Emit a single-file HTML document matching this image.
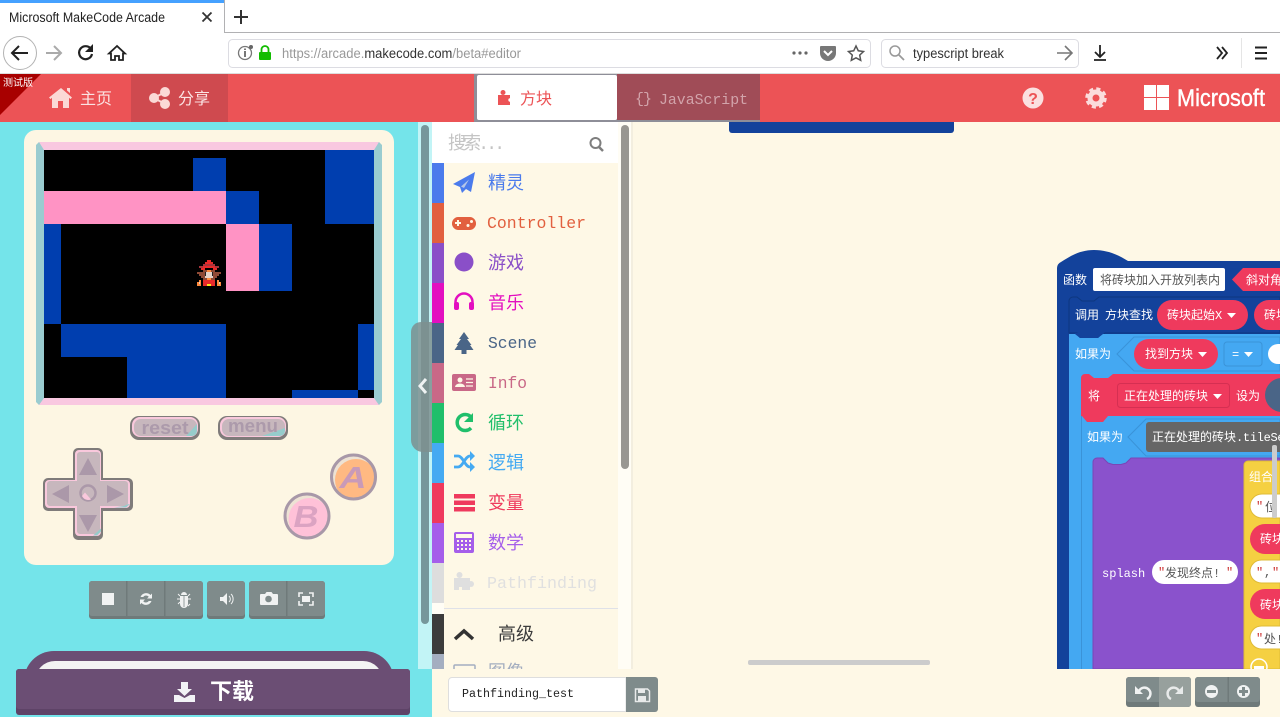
<!DOCTYPE html>
<html lang="zh"><head><meta charset="utf-8"><title>Microsoft MakeCode Arcade</title>
<style>
html,body{margin:0;padding:0;width:1280px;height:717px;overflow:hidden;background:#fff}
svg{display:block;font-family:"Liberation Sans","WenQuanYi Zen Hei","Noto Sans CJK SC",sans-serif}
.m{font-family:"Liberation Mono","WenQuanYi Zen Hei","Noto Sans CJK SC",monospace}
.t{font-size:18px;font-family:"Liberation Mono","WenQuanYi Zen Hei","Noto Sans CJK SC",monospace}
.b{font-size:12px;fill:#fff;font-family:"Liberation Mono","Noto Sans CJK SC",monospace}
</style></head><body>
<svg width="1280" height="717" viewBox="0 0 1280 717" xmlns="http://www.w3.org/2000/svg">
<!-- browser chrome -->
<rect width="1280" height="74" fill="#fff"/>
<rect x="0" y="0" width="224" height="3" fill="#45a1ff"/>
<rect x="224" y="0" width="1" height="33" fill="#b1b1b3"/>
<rect x="224" y="32" width="1056" height="1" fill="#b1b1b3"/>
<text x="9" y="22" font-size="13.5" fill="#222" textLength="156" lengthAdjust="spacingAndGlyphs">Microsoft MakeCode Arcade</text>
<path d="M202.500 12.500l9 9m0-9l-9 9" stroke="#333" stroke-width="1.800" fill="none"/>
<path d="M241 10v14M234 17h14" stroke="#333" stroke-width="2" fill="none"/>
<circle cx="20" cy="53" r="16.500" fill="#fff" stroke="#b3b3b3"/>
<path d="M28 53H13M19 46l-7 7 7 7" stroke="#222" stroke-width="2" fill="none"/>
<path d="M61 53H46M54 46l7 7-7 7" stroke="#aaa" stroke-width="2" fill="none"/>
<path d="M91 49a6.500 6.500 0 1 0 1 5" stroke="#222" stroke-width="2.200" fill="none"/><path d="M93 44v8h-8z" fill="#222"/>
<path d="M117 46l-8 7.500h2v6.500h4v-4h4v4h4v-6.500h2z" stroke="#222" stroke-width="1.800" fill="none"/>
<rect x="228.500" y="39.500" width="642" height="28" rx="4" fill="#fff" stroke="#dcdce2"/>
<circle cx="245" cy="53" r="6.500" fill="none" stroke="#777" stroke-width="1.300"/><rect x="244" y="51" width="2" height="6" fill="#777"/><rect x="244" y="48.500" width="2" height="1.500" fill="#777"/><circle cx="251" cy="47" r="2" fill="#666"/>
<rect x="259" y="52" width="12" height="8" rx="1" fill="#12bc00"/><path d="M261.500 52v-2.500a3.500 3.500 0 0 1 7 0V52" stroke="#12bc00" stroke-width="1.800" fill="none"/>
<text x="282" y="58" font-size="13.500" textLength="239" lengthAdjust="spacingAndGlyphs" fill="#999">https://arcade.<tspan fill="#333">makecode.com</tspan>/beta#editor</text>
<g fill="#666"><circle cx="794" cy="53" r="1.600"/><circle cx="800" cy="53" r="1.600"/><circle cx="806" cy="53" r="1.600"/></g>
<path d="M821 46h14a1 1 0 0 1 1 1v6a8 8 0 0 1-16 0v-6a1 1 0 0 1 1-1z" fill="#777"/><path d="M824 51l4 4 4-4" stroke="#fff" stroke-width="2" fill="none"/>
<path d="M856 46l2.300 4.800 5.200.700-3.800 3.600 1 5.200-4.700-2.500-4.700 2.500 1-5.200-3.800-3.600 5.200-.700z" fill="none" stroke="#555" stroke-width="1.500"/>
<rect x="881.500" y="39.500" width="197" height="28" rx="4" fill="#fff" stroke="#dcdce2"/>
<circle cx="895" cy="51" r="5" fill="none" stroke="#999" stroke-width="1.500"/><path d="M899 55l5 5" stroke="#999" stroke-width="1.800"/>
<text x="913" y="58" font-size="13.500" fill="#333" textLength="91" lengthAdjust="spacingAndGlyphs">typescript break</text>
<path d="M1072 53h-15M1065 46l7 7-7 7" stroke="#777" stroke-width="1.600" fill="none"/>
<path d="M1100 45v12M1095 52l5 5 5-5M1094 60h12" stroke="#222" stroke-width="1.800" fill="none"/>
<path d="M1217 47l5 6-5 6M1222 47l5 6-5 6" stroke="#222" stroke-width="1.800" fill="none"/>
<rect x="1241" y="38" width="1" height="30" fill="#e5e5e5"/>
<path d="M1255 47.500h12M1255 53h12M1255 58.500h12" stroke="#222" stroke-width="2"/>
<rect y="73" width="1280" height="1" fill="#ddd"/>

<!-- left simulator area -->
<rect x="0" y="122" width="432" height="595" fill="#74e4ea"/>
<rect x="24" y="130" width="370" height="435" rx="12" fill="#fdf6e3"/>
<!-- screen bezel -->
<path d="M39 142h340l3 3v257l-3 3H39l-3-3V145z" fill="#9accd0"/>
<path d="M39 142h340l-5 8H44zM39 405h340l-5-7H44z" fill="#f9c8e0"/>
<rect x="44" y="150" width="330" height="248" fill="#000"/>
<g fill="#003eaf" shape-rendering="crispEdges">
<rect x="193" y="158" width="33" height="33"/><rect x="325" y="150" width="49" height="74"/><rect x="226" y="191" width="33" height="33"/>
<rect x="44" y="224" width="17" height="100"/><rect x="259" y="224" width="33" height="67"/><rect x="61" y="324" width="165" height="33"/>
<rect x="127" y="357" width="99" height="41"/><rect x="358" y="324" width="16" height="66"/><rect x="292" y="390" width="66" height="8"/>
</g>
<g fill="#ff93c4" shape-rendering="crispEdges"><rect x="44" y="191" width="182" height="33"/><rect x="226" y="224" width="33" height="67"/></g>
<!-- sprite -->
<g shape-rendering="crispEdges">
<g fill="#e82a2a"><rect x="207" y="260" width="4" height="2"/><rect x="205" y="262" width="8" height="2"/><rect x="203" y="266" width="12" height="2"/><rect x="201" y="268" width="4" height="2"/><rect x="213" y="268" width="4" height="2"/><rect x="203" y="280" width="12" height="6"/></g>
<g fill="#a8343c"><rect x="203" y="264" width="12" height="2"/><rect x="199" y="266" width="4" height="2"/><rect x="215" y="266" width="4" height="2"/></g>
<g fill="#8e4a36"><rect x="203" y="270" width="12" height="2"/><rect x="201" y="272" width="4" height="6"/><rect x="213" y="272" width="4" height="6"/><rect x="197" y="272" width="4" height="2"/><rect x="217" y="272" width="4" height="2"/><rect x="199" y="274" width="2" height="2"/><rect x="217" y="274" width="2" height="2"/><rect x="203" y="278" width="12" height="2"/></g>
<g fill="#ff8a3d"><rect x="207" y="270" width="4" height="2"/><rect x="207" y="278" width="4" height="2"/><rect x="199" y="280" width="2" height="2"/><rect x="217" y="280" width="2" height="2"/><rect x="197" y="282" width="4" height="4"/><rect x="217" y="282" width="4" height="4"/></g>
<g fill="#e6d3c8"><rect x="205" y="272" width="8" height="4"/><rect x="205" y="276" width="8" height="2"/><rect x="199" y="282" width="1" height="2"/><rect x="219" y="282" width="1" height="2"/></g>
<g fill="#222"><rect x="205" y="272" width="1" height="4"/><rect x="212" y="272" width="1" height="4"/></g>
<rect x="207" y="284" width="4" height="2" fill="#ffe51e"/>
</g>
<!-- reset/menu -->
<g font-weight="bold" font-size="18" text-anchor="middle" fill="#ac9aab">
<rect x="130" y="416" width="70" height="24" rx="9" fill="#7f7b7a"/><rect x="132" y="417" width="66" height="20" rx="8" fill="#f9c8dc"/><rect x="134" y="419" width="63" height="17" rx="7" fill="#c7b7bd"/><path d="M186 436h6a5 5 0 0 0 5-5v-7z" fill="#96cccb"/>
<text x="165" y="434" textLength="47" lengthAdjust="spacingAndGlyphs">reset</text>
<rect x="218" y="416" width="70" height="24" rx="9" fill="#7f7b7a"/><rect x="220" y="417" width="66" height="20" rx="8" fill="#f9c8dc"/><rect x="222" y="419" width="63" height="17" rx="7" fill="#c7b7bd"/><path d="M262 436h18a5 5 0 0 0 5-5v-3z" fill="#96cccb"/>
<text x="253" y="432" textLength="50" lengthAdjust="spacingAndGlyphs">menu</text>
</g>
<!-- dpad -->
<path d="M78 448h20a5 5 0 0 1 5 5v25h25a5 5 0 0 1 5 5v23a5 5 0 0 1-5 5h-25v24a5 5 0 0 1-5 5H78a5 5 0 0 1-5-5v-24H48a5 5 0 0 1-5-5v-23a5 5 0 0 1 5-5h25v-25a5 5 0 0 1 5-5z" fill="#7f7b7a"/>
<path d="M79 450h18a4 4 0 0 1 4 4v26h25a4 4 0 0 1 4 4v20a4 4 0 0 1-4 4h-25v24a4 4 0 0 1-4 4H79a4 4 0 0 1-4-4v-24H49a4 4 0 0 1-4-4v-20a4 4 0 0 1 4-4h26v-26a4 4 0 0 1 4-4z" fill="#f9c8dc"/>
<path d="M80 452h17a3 3 0 0 1 3 3v26h25a3 3 0 0 1 3 3v19a3 3 0 0 1-3 3h-25v25a3 3 0 0 1-3 3H80a3 3 0 0 1-3-3v-25H50a3 3 0 0 1-3-3v-19a3 3 0 0 1 3-3h27v-26a3 3 0 0 1 3-3z" fill="#c7b7bd"/>
<path d="M93 535.500h4l4-4v-3zM114 507.500h12l4-3.500-3 .500-3 1.500z" fill="#96cccb"/>
<g fill="#ab98a9"><path d="M88 458l9 17H79zM88 532l-9-17h18zM52 494l17-9v18zM124 494l-17-9v18z"/></g>
<circle cx="88" cy="493" r="7.500" fill="#c7b7bd" stroke="#ab98a9" stroke-width="2.500"/><path d="M82 496a7 7 0 0 0 9 3.500l-6-7z" fill="#f9c8dc"/>
<!-- A B -->
<clipPath id="ca"><circle cx="353.500" cy="477" r="22"/></clipPath>
<clipPath id="cb"><circle cx="307" cy="516" r="22"/></clipPath>
<circle cx="353.500" cy="477" r="22" fill="#ede2d4"/>
<circle cx="356" cy="480" r="21" fill="#ffb982" clip-path="url(#ca)"/>
<circle cx="353.500" cy="477" r="22" fill="none" stroke="#a898a8" stroke-width="3"/>
<text x="353" y="488" font-size="31" font-weight="bold" font-style="italic" fill="#c99ab8" text-anchor="middle" textLength="27" lengthAdjust="spacingAndGlyphs">A</text>
<circle cx="307" cy="516" r="22" fill="#ede2d4"/>
<circle cx="309.500" cy="519" r="21" fill="#ffc1d8" clip-path="url(#cb)"/>
<circle cx="307" cy="516" r="22" fill="none" stroke="#a898a8" stroke-width="3"/>
<text x="306" y="527" font-size="31" font-weight="bold" font-style="italic" fill="#dba3c2" text-anchor="middle" textLength="25" lengthAdjust="spacingAndGlyphs">B</text>
<!-- sim buttons -->
<g fill="#6f7a7a"><rect x="89" y="581" width="114" height="38" rx="3"/><rect x="207" y="581" width="38" height="38" rx="3"/><rect x="249" y="581" width="76" height="38" rx="3"/></g>
<g fill="#7f8b8b"><rect x="89" y="581" width="114" height="35" rx="3"/><rect x="207" y="581" width="38" height="35" rx="3"/><rect x="249" y="581" width="76" height="35" rx="3"/></g>
<g fill="#6f7a7a"><rect x="126" y="581" width="1.500" height="38"/><rect x="164" y="581" width="1.500" height="38"/><rect x="286" y="581" width="1.500" height="38"/></g>
<g fill="#f0f2f2" stroke="none">
<rect x="102" y="593" width="12" height="12"/>
<path d="M140.500 597a6 6 0 0 1 10-2l1.500-1.500v5h-5l1.800-1.800a3.500 3.500 0 0 0-5.600 .3zM151.500 601a6 6 0 0 1-10 2l-1.500 1.500v-5h5l-1.800 1.800a3.500 3.500 0 0 0 5.600-.3z"/>
<path d="M181 595a3 3 0 0 1 6 0zM180 596h8v8a4 4 0 0 1-8 0z"/><path d="M178 594l2 2M190 594l-2 2M177 599h3M191 599h-3M178 604l2-2M190 604l-2 2" stroke="#f0f2f2" fill="none"/><rect x="183.600" y="596" width=".8" height="11" fill="#7f8b8b"/>
<path d="M220 597h3l4-4v12l-4-4h-3z"/><path d="M229 596a4 4 0 0 1 0 6M231 594a7 7 0 0 1 0 10" stroke="#f0f2f2" fill="none"/>
<path d="M261 594h4l1.500-2h5l1.500 2h4a1 1 0 0 1 1 1v9a1 1 0 0 1-1 1h-16a1 1 0 0 1-1-1v-9a1 1 0 0 1 1-1z"/>
</g>
<circle cx="268.500" cy="599" r="3.300" fill="#7f8b8b"/>
<path d="M299 597v-4h4M309 593h4v4M313 601v4h-4M303 605h-4v-4" stroke="#f0f2f2" stroke-width="1.600" fill="none"/><rect x="302" y="596" width="8" height="6" fill="#f0f2f2"/>
<!-- download -->
<path d="M24 700v-19a30 30 0 0 1 30-30h310a30 30 0 0 1 30 30v19z" fill="#6b4e74"/>
<path d="M35 700v-19a20 20 0 0 1 20-20h308a20 20 0 0 1 20 20v19z" fill="#f3f3f3"/>
<rect x="16" y="669" width="394" height="46" rx="3" fill="#5e4367"/>
<rect x="16" y="669" width="394" height="40" rx="3" fill="#6b4e74"/>
<path d="M181 682h7v7h4l-7.500 7-7.500-7h4z" fill="#f2f2f6"/><path d="M174 695h5l5.500 3 5.500-3h5v7h-21z" fill="#f2f2f6"/>
<text x="210" y="699" font-size="22" font-weight="bold" fill="#fff" font-family="Noto Sans CJK SC">下载</text>

<!-- header -->
<rect y="74" width="1280" height="48" fill="#ec5356"/>
<path d="M0 74h41L0 115z" fill="#a80000"/>
<text x="3" y="86" font-size="10" fill="#fff" font-family="Noto Sans CJK SC">测试版</text>
<rect x="131" y="74" width="97" height="48" fill="#cf4a4f"/>
<path d="M61 88l11 9.500-1.500 1.600-1.500-1.300V108h-6v-7h-5v7h-6V97.800l-1.500 1.300-1.500-1.600zM67 88h3v5l-3-2.500z" fill="#fbd9d6"/>
<text x="80" y="104" font-size="16" fill="#fbe3e3">主页</text>
<g fill="#fbd9d6"><circle cx="154" cy="98" r="5"/><circle cx="165" cy="92" r="5"/><circle cx="165" cy="104" r="5"/><path d="M154 98L165 92M154 98L165 104" stroke="#fbd9d6" stroke-width="2"/></g>
<text x="178" y="104" font-size="16" fill="#fbe3e3">分享</text>
<rect x="474" y="74" width="286" height="48" fill="#8e8e98"/>
<rect x="617" y="74" width="143" height="46" fill="#a04c57"/>
<rect x="477" y="75" width="140" height="45" rx="2" fill="#fff"/>
<rect x="498" y="95" width="12" height="10" fill="#ec5356"/><circle cx="503" cy="92.500" r="2.500" fill="#ec5356"/><circle cx="510" cy="100" r="1.700" fill="#fff"/>
<text x="520" y="104" font-size="16" fill="#ec5356">方块</text>
<text x="635" y="103" class="m" font-size="15" fill="#d2a4ab" textLength="17">{}</text>
<text x="659" y="104" class="m" font-size="15" fill="#d2a4ab" textLength="89" lengthAdjust="spacingAndGlyphs">JavaScript</text>
<circle cx="1033" cy="98" r="10.500" fill="#fbe0e0"/><text x="1033" y="104" font-size="16" font-weight="bold" fill="#ec5356" text-anchor="middle">?</text>
<circle cx="1096" cy="98" r="6" fill="none" stroke="#fbdcdc" stroke-width="5"/><circle cx="1096" cy="98" r="9" fill="none" stroke="#fbdcdc" stroke-width="3.500" stroke-dasharray="4 3.070"/>
<g fill="#fff"><rect x="1144" y="85" width="12" height="12"/><rect x="1157" y="85" width="12" height="12"/><rect x="1144" y="98" width="12" height="12"/><rect x="1157" y="98" width="12" height="12"/></g>
<text x="1177" y="106" font-size="24" fill="#fff" stroke="#fff" stroke-width=".4" textLength="88" lengthAdjust="spacingAndGlyphs">Microsoft</text>

<!-- workspace -->
<rect x="432" y="122" width="848" height="595" fill="#fef8e6"/>
<path d="M729 122h225v8a3 3 0 0 1-3 3H732a3 3 0 0 1-3-3z" fill="#13429b"/>

<!-- blocks -->
<path d="M1057 669V268a7 7 0 0 1 4-6c8-5 18-12 33-12s26 6 34 11H1280v408z" fill="#13429b"/>
<rect x="1093" y="268" width="132" height="23" rx="2" fill="#fff"/>
<text x="1063" y="284" class="b" fill="#fff">函数</text>
<text x="1100" y="284" class="b" style="fill:#555">将砖块加入开放列表内</text>
<path d="M1232 279.500L1243 268H1280V291H1243z" fill="#ef3a5d"/>
<text x="1246" y="284" class="b">斜对角</text>
<path d="M1069 333v-32a4 4 0 0 1 4-4h4l5 4h12l5-4h181v36h-175l-5 5h-18l-5-5z" fill="#13429b" stroke="#0e377f"/>
<text x="1075" y="319" class="b">调用</text><text x="1105" y="319" class="b">方块查找</text>
<rect x="1157" y="300" width="91" height="30" rx="15" fill="#ef3a5d"/><text x="1167" y="319" class="b">砖块起始X</text>
<path d="M1227 313h9l-4.500 5z" fill="#fff"/>
<rect x="1254" y="300" width="40" height="30" rx="15" fill="#ef3a5d"/><text x="1264" y="319" class="b">砖块</text>
<path d="M1069 334h6l5 4h18l5-4h177v335h-211z" fill="#44a8f2"/>
<path d="M1075 333l5 5h18l5-5" fill="#13429b"/>
<text x="1075" y="358" class="b">如果为</text>
<path d="M1117 354l17-17h146v34h-146z" fill="#44a8f2" stroke="#3a93d8"/>
<rect x="1134" y="339" width="84" height="30" rx="15" fill="#ef3a5d"/><text x="1145" y="358" class="b">找到方块</text><path d="M1198 352h9l-4.500 5z" fill="#fff"/>
<rect x="1224" y="342" width="38" height="24" rx="3" fill="#44a8f2" stroke="#3a93d8"/>
<text x="1232" y="358" class="b">=</text><path d="M1244 352h9l-4.500 5z" fill="#fff"/>
<rect x="1268" y="344" width="30" height="20" rx="10" fill="#fff"/>
<path d="M1081 428V378a4 4 0 0 1 4-4h4l5 4h14l5-4h167v42h-172l-5 6h-16l-5-6h-1z" fill="#ef3a5d"/>
<path d="M1081.500 416v253" stroke="#3a93d8" fill="none"/>
<text x="1088" y="400" class="b">将</text>
<rect x="1117.500" y="383.500" width="112" height="24" rx="3" fill="#ef3a5d" stroke="#d52f52"/>
<text x="1124" y="400" class="b">正在处理的砖块</text><path d="M1213 394h9l-4.500 5z" fill="#fff"/>
<text x="1236" y="400" class="b">设为</text>
<rect x="1265" y="378" width="40" height="34" rx="17" fill="#4a6587"/>
<text x="1087" y="441" class="b">如果为</text>
<path d="M1128 437l18-18h134v37h-134z" fill="#44a8f2" stroke="#3a93d8"/>
<rect x="1146" y="422" width="140" height="30" rx="3" fill="#666"/>
<text x="1152" y="441" class="b">正在处理的砖块<tspan letter-spacing="-.3">.tileSe</tspan></text>
<path d="M1093 669V462a4 4 0 0 1 4-4h6l5 5 5 1.500h8l5-1.500 5-5h149v211z" fill="#8a52cc" stroke="#7a46b6"/>
<text x="1102" y="577" class="b">splash</text>
<rect x="1152" y="560" width="86" height="24" rx="12" fill="#fff"/>
<text x="1158" y="576" class="b" style="fill:#c33">"</text><text x="1165" y="577" class="b" style="fill:#555">发现终点!</text><text x="1226" y="576" class="b" style="fill:#c33">"</text>
<path d="M1244 669V465a4 4 0 0 1 4-4h32v208z" fill="#f5d042" stroke="#dfbb37"/>
<text x="1249" y="481" class="b">组合</text>
<g fill="#fff" stroke="#dfbb37"><rect x="1250" y="494" width="60" height="24" rx="12"/><rect x="1250" y="560" width="60" height="23" rx="11.500"/><rect x="1250" y="626" width="60" height="23" rx="11.500"/></g>
<g fill="#ef3a5d"><rect x="1250" y="524" width="60" height="30" rx="15"/><rect x="1250" y="589" width="60" height="30" rx="15"/></g>
<text x="1256" y="510" class="b" style="fill:#c33">"</text><text x="1265" y="511" class="b" style="fill:#555">位</text>
<text x="1260" y="543" class="b">砖块</text><text x="1260" y="609" class="b">砖块</text>
<text x="1256" y="576" class="b" style="fill:#c33">"</text><text x="1264" y="576" class="b" style="fill:#555">,</text><text x="1272" y="576" class="b" style="fill:#c33">"</text>
<text x="1256" y="642" class="b" style="fill:#c33">"</text><text x="1264" y="643" class="b" style="fill:#555">处!</text>
<circle cx="1259" cy="667" r="8" fill="none" stroke="#fff" stroke-width="1.500"/><rect x="1254" y="666" width="10" height="3" fill="#fff"/>
<rect x="1272" y="445" width="5" height="73" rx="2" fill="#ccc"/>
<rect x="748" y="660" width="182" height="5" rx="2" fill="#ccc"/>

<!-- toolbox -->
<rect x="418" y="122" width="14" height="547" fill="#c2f4f6"/>
<rect x="421" y="125" width="8" height="499" rx="4" fill="#76979b"/>
<rect x="432" y="122" width="200" height="547" fill="#fffdf5"/>
<rect x="432" y="122" width="186" height="41" fill="#fff"/>
<rect x="444" y="163" width="174" height="506" fill="#fef8e6"/>
<rect x="631" y="122" width="2" height="547" fill="#f3eedf"/>
<rect x="621" y="125" width="8" height="344" rx="4" fill="#999791"/>
<text x="448" y="149" class="t" fill="#c4c4c4" textLength="57">搜索...</text>
<circle cx="595.500" cy="143" r="5" fill="none" stroke="#7e7e7e" stroke-width="2"/><path d="M599 147l4 4" stroke="#7e7e7e" stroke-width="2.500"/>
<g shape-rendering="crispEdges">
<rect x="432" y="163" width="12" height="40" fill="#4b7bec"/>
<rect x="432" y="203" width="12" height="40" fill="#e2603f"/>
<rect x="432" y="243" width="12" height="40" fill="#8a4fc8"/>
<rect x="432" y="283" width="12" height="40" fill="#e30fc0"/>
<rect x="432" y="323" width="12" height="40" fill="#4a6587"/>
<rect x="432" y="363" width="12" height="40" fill="#c96887"/>
<rect x="432" y="403" width="12" height="40" fill="#20bf6b"/>
<rect x="432" y="443" width="12" height="40" fill="#45aaf2"/>
<rect x="432" y="483" width="12" height="40" fill="#ef3a5d"/>
<rect x="432" y="523" width="12" height="40" fill="#a55eea"/>
<rect x="432" y="563" width="12" height="40" fill="#dddddd"/>
<rect x="444" y="608" width="174" height="1" fill="#dfe1e8"/>
<rect x="432" y="614" width="12" height="40" fill="#3c3c3c"/>
<rect x="432" y="654" width="12" height="15" fill="#a4aec0"/>
</g>
<text x="488" y="189" class="t" fill="#4b7bec">精灵</text>
<text x="487" y="228" class="t" fill="#e2603f" style="font-size:16.500px" textLength="99" lengthAdjust="spacingAndGlyphs">Controller</text>
<text x="488" y="269" class="t" fill="#8a4fc8">游戏</text>
<text x="488" y="309" class="t" fill="#e30fc0">音乐</text>
<text x="488" y="348" class="t" fill="#4a6587" style="font-size:16.500px" textLength="49" lengthAdjust="spacingAndGlyphs">Scene</text>
<text x="488" y="388" class="t" fill="#c96887" style="font-size:16.500px" textLength="39" lengthAdjust="spacingAndGlyphs">Info</text>
<text x="488" y="429" class="t" fill="#20bf6b">循环</text>
<text x="488" y="469" class="t" fill="#45aaf2">逻辑</text>
<text x="488" y="509" class="t" fill="#ef3a5d">变量</text>
<text x="488" y="549" class="t" fill="#a55eea">数学</text>
<text x="487" y="588" class="t" fill="#e0e0e0" style="font-size:16.500px" textLength="110" lengthAdjust="spacingAndGlyphs">Pathfinding</text>
<text x="498" y="640" class="t" fill="#3c3c3c">高级</text>
<text x="488" y="678" class="t" fill="#a4aec0">图像</text>
<!-- toolbox icons -->
<path d="M475 172l-22 12 7 3 2 6 4-4 5 3z" fill="#4b7bec"/><path d="M461 186.500l8-7-5 8.500z" fill="#fef8e6" fill-opacity=".6"/>
<path d="M458 217h12a6.500 6.500 0 0 1 6 6 6.500 6.500 0 0 1-6 7h-12a6.500 6.500 0 0 1-6-7 6.500 6.500 0 0 1 6-6z" fill="#e2603f"/><path d="M455 223h6M458 220v6" stroke="#fef8e6" stroke-width="2"/><circle cx="468" cy="225.500" r="1.500" fill="#fef8e6"/><circle cx="471.500" cy="221.500" r="1.500" fill="#fef8e6"/>
<circle cx="464" cy="262" r="9.500" fill="#8a4fc8"/>
<path d="M455.500 305v-3a8.500 8.500 0 0 1 17 0v3" stroke="#e30fc0" stroke-width="2.500" fill="none"/><rect x="454" y="302" width="5" height="8" rx="2" fill="#e30fc0"/><rect x="469" y="302" width="5" height="8" rx="2" fill="#e30fc0"/>
<path d="M464 332l5 7h-2l4.500 6h-1.500l3.500 5h-7v4h-5v-4h-7l3.500-5h-1.500l4.500-6h-2z" fill="#4a6587"/>
<rect x="452" y="374" width="24" height="17" rx="2" fill="#c96887"/><circle cx="460" cy="380" r="2.500" fill="#fef8e6"/><path d="M455 387a5 3.500 0 0 1 10 0z" fill="#fef8e6"/><path d="M466 379h7M466 382.500h7M466 386h7" stroke="#fef8e6" stroke-width="1.300"/>
<path d="M471 417a8 8 0 1 0 0 11" stroke="#20bf6b" stroke-width="3.500" fill="none"/><path d="M473 413v9h-9z" fill="#20bf6b"/>
<path d="M454 456h4c5 0 7 11 12 11h2M454 467h4c5 0 7-11 12-11h2" stroke="#45aaf2" stroke-width="2.800" fill="none"/><path d="M470 451l5 5-5 5zM470 462l5 5-5 5z" fill="#45aaf2"/>
<g fill="#ef3a5d"><rect x="454" y="494" width="21" height="4.500"/><rect x="454" y="500.500" width="21" height="4.500"/><rect x="454" y="507" width="21" height="4.500"/></g>
<rect x="455" y="533" width="18" height="19" rx="1" fill="none" stroke="#a55eea" stroke-width="2"/><rect x="455" y="538" width="18" height="14" fill="#a55eea"/>
<g fill="#fef8e6"><path d="M457 540h2v2h-2zM461 540h2v2h-2zM465 540h2v2h-2zM469 540h2v2h-2zM457 544h2v2h-2zM461 544h2v2h-2zM465 544h2v2h-2zM469 544h2v2h-2zM457 548h2v2h-2zM461 548h2v2h-2zM465 548h2v2h-2zM469 548h2v2h-2z"/></g>
<g fill="#dfdfdf"><rect x="454" y="578" width="16" height="12"/><circle cx="459.500" cy="575" r="3"/><circle cx="471" cy="584" r="3"/></g><rect x="459" y="587" width="3" height="3" fill="#fef8e6"/>
<path d="M455 639l9-8 9 8" stroke="#333" stroke-width="3.500" fill="none"/>
<rect x="454" y="665" width="21" height="14" rx="1" fill="none" stroke="#a4aec0" stroke-width="1.500"/>
<!-- handle -->
<path d="M432 322h-11a10 10 0 0 0-10 10v108a12 12 0 0 0 12 12h9z" fill="#7e8f8f" fill-opacity=".85"/>
<path d="M426 379l-6 7 6 7" stroke="#eef3f3" stroke-width="3" fill="none"/>

<!-- bottom bar -->
<rect x="432" y="669" width="848" height="48" fill="#fef8e6"/>
<path d="M626 677.500H452a3.500 3.500 0 0 0-3.500 3.500v27a3.500 3.500 0 0 0 3.500 3.500H626z" fill="#fff" stroke="#dedede"/>
<text x="462" y="697" class="m" font-size="11.500" fill="#222" textLength="112" lengthAdjust="spacingAndGlyphs">Pathfinding_test</text>
<path d="M626 677h29a3 3 0 0 1 3 3v29a3 3 0 0 1-3 3h-29z" fill="#7f8b8b"/>
<path d="M635.500 689h12l2 2v10.500h-14z" fill="none" stroke="#e8eaea" stroke-width="1.500"/><rect x="638" y="689.500" width="7" height="3.500" fill="#e8eaea"/><rect x="638" y="696" width="8" height="5" fill="#e8eaea"/>
<rect x="1126" y="677" width="65" height="30" rx="3" fill="#6f7a7a"/><rect x="1126" y="677" width="65" height="25" rx="3" fill="#7f8b8b"/>
<path d="M1159 677h29a3 3 0 0 1 3 3v24a3 3 0 0 1-3 3h-29z" fill="#97a09d"/>
<rect x="1195" y="677" width="65" height="30" rx="3" fill="#6f7a7a"/><rect x="1195" y="677" width="65" height="25" rx="3" fill="#7f8b8b"/>
<rect x="1227.500" y="677" width="1.500" height="30" fill="#6f7a7a"/>
<path d="M1139 691a6 6 0 1 1 8 8" stroke="#f0f2f2" stroke-width="2.500" fill="none"/><path d="M1135 686v8h8z" fill="#f0f2f2"/>
<path d="M1179 691a6 6 0 1 0-8 8" stroke="#e8eaea" stroke-width="2.500" fill="none"/><path d="M1183 686v8h-8z" fill="#e8eaea"/>
<circle cx="1211.500" cy="691.500" r="6.500" fill="#f0f2f2"/><rect x="1207" y="690" width="9" height="3" fill="#7f8b8b"/>
<circle cx="1243.500" cy="691.500" r="6.500" fill="#f0f2f2"/><path d="M1239 690h9v3h-9zM1242 687h3v9h-3z" fill="#7f8b8b"/>
</svg>
</body></html>
